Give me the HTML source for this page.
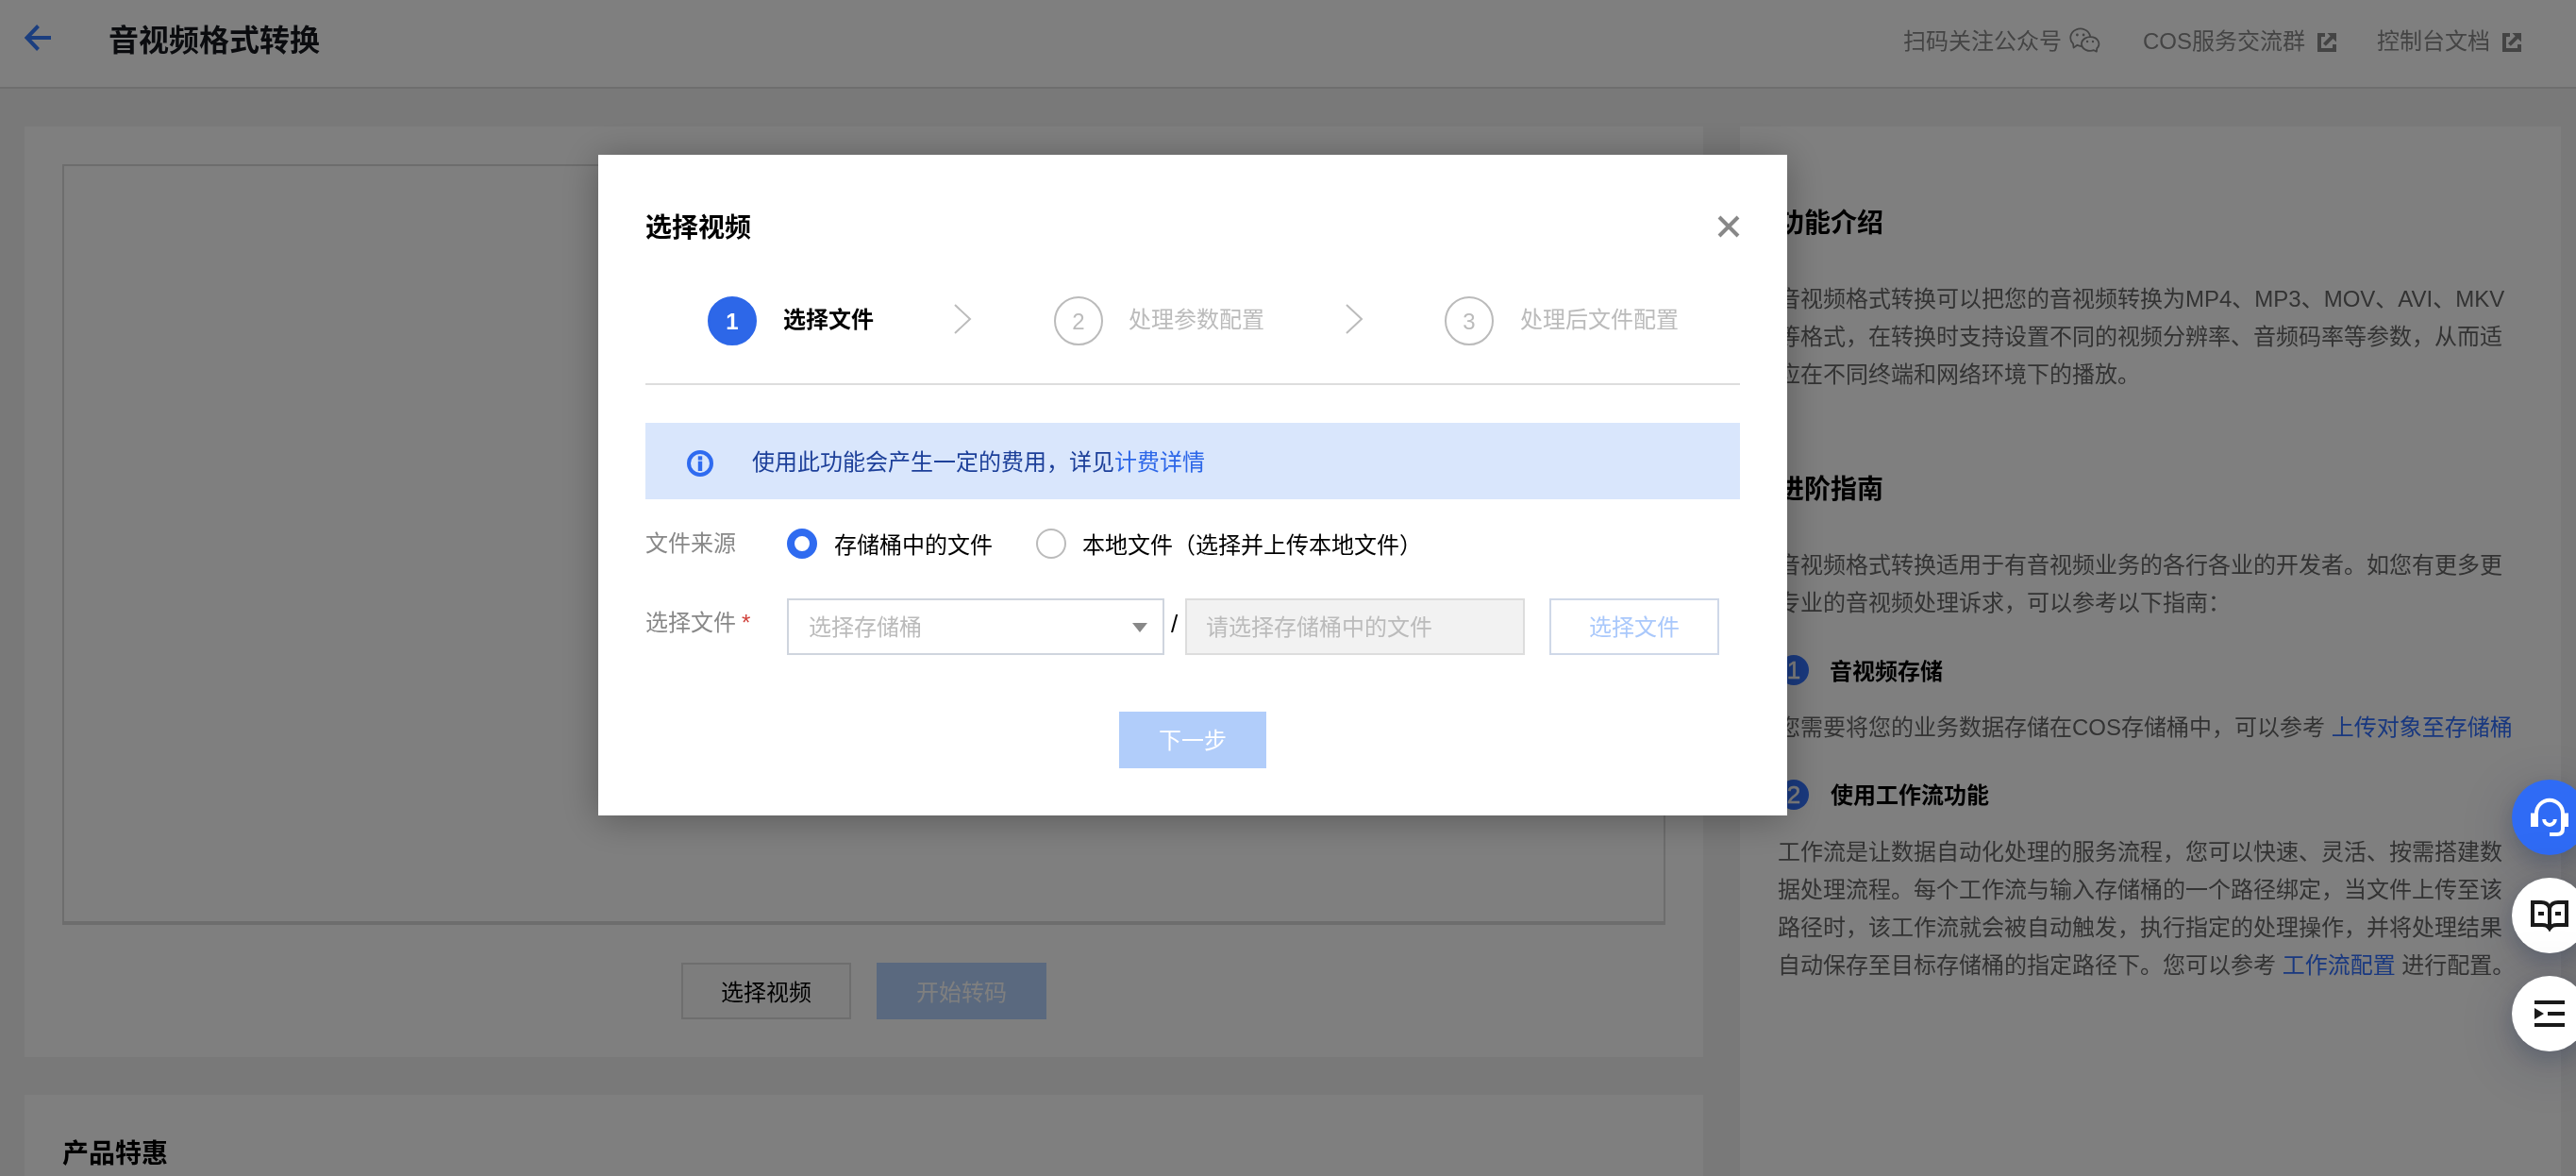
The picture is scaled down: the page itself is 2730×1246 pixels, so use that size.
<!DOCTYPE html>
<html lang="zh-CN">
<head>
<meta charset="utf-8">
<title>音视频格式转换</title>
<style>
*{box-sizing:border-box;margin:0;padding:0}
html,body{width:2730px;height:1246px;overflow:hidden;background:#f2f2f2}
body{position:relative;font-family:"Liberation Sans","Noto Sans CJK SC",sans-serif;font-size:24px;color:#000}
#root{position:absolute;left:0;top:0;width:2730px;height:1246px;overflow:hidden;will-change:transform}
.abs{position:absolute;white-space:nowrap}
.t{position:absolute;white-space:nowrap;line-height:40px;height:40px}
.b{font-weight:700}
a{color:#3270ff;text-decoration:none}
/* page */
#hdr{position:absolute;left:0;top:0;width:2730px;height:94px;background:#fff;border-bottom:2px solid #ddd}
.card{position:absolute;background:#fff}
.gray{color:#888}
.para{color:#666}
/* overlay */
#mask{position:absolute;left:0;top:0;width:2730px;height:1246px;background:rgba(0,0,0,.5)}
/* modal */
#modal{position:absolute;left:634px;top:164px;width:1260px;height:700px;background:#fff;box-shadow:0 4px 38px rgba(0,0,0,.3)}
#modal .t,#modal .abs,#modal div{position:absolute}
.circ{width:52px;height:52px;border-radius:50%;border:2px solid #bbb;color:#bbb;text-align:center;line-height:50px;font-size:24px}
.circ.on{background:#2d67e8;border-color:#2d67e8;color:#fff;font-weight:700}
.ph{color:#bbb}
.fab{position:absolute;left:2662px;width:80px;height:80px;border-radius:50%;background:#fff;box-shadow:0 8px 22px rgba(10,30,70,.2),0 14px 70px rgba(10,30,70,.22)}
.fab svg{position:absolute}
</style>
</head>
<body>
<div id="root">
<!-- ===== underlying page ===== -->
<div id="hdr"></div>
<svg class="abs" style="left:24px;top:24px" width="32" height="32" viewBox="0 0 32 32"><path d="M30 16H6M16.5 3.5L4.5 16l12 12.5" fill="none" stroke="#367cff" stroke-width="4"/></svg>
<div class="t b" style="left:115px;top:23px;font-size:32px;color:#16191f">音视频格式转换</div>
<div class="t gray" style="left:2017px;top:24px">扫码关注公众号</div>
<div class="t gray" style="left:2271px;top:24px">COS服务交流群</div>
<div class="t gray" style="left:2519px;top:24px">控制台文档</div>

<svg class="abs" style="left:2193px;top:29px" width="34" height="28" viewBox="0 0 34 28" fill="none" stroke="#888" stroke-width="1.8" stroke-linejoin="round" stroke-linecap="round"><path d="M22.1 9.23A10.5 9.5 0 1 0 4.05 17.4L4.6 21.6L8.45 18.75A10.5 9.5 0 0 0 12.98 19.98"/><path d="M29.25 22.26L28.9 25.7L26.09 24.21A9.2 7.4 0 1 1 29.25 22.26z"/><g fill="#888" stroke="none"><circle cx="8.4" cy="8" r="1.4"/><circle cx="15.1" cy="8" r="1.4"/><circle cx="19.1" cy="15" r="1.2"/><circle cx="25" cy="15" r="1.2"/></g></svg>
<svg class="abs" style="left:2456px;top:35px" width="20" height="20" viewBox="0 0 20 20" fill="#888"><path d="M0 0h8v4H4v12h12v-4h4v8H0z"/><path d="M10.4 0H20v9.6z"/><path d="M6 11l2.8 2.8L18 4.6L15.2 1.8z"/></svg>
<svg class="abs" style="left:2652px;top:35px" width="20" height="20" viewBox="0 0 20 20" fill="#888"><path d="M0 0h8v4H4v12h12v-4h4v8H0z"/><path d="M10.4 0H20v9.6z"/><path d="M6 11l2.8 2.8L18 4.6L15.2 1.8z"/></svg>

<!-- left card -->
<div class="card" style="left:26px;top:134px;width:1779px;height:986px"></div>
<div class="abs" style="left:66px;top:174px;width:1699px;height:806px;border:2px solid #dbdbdb;border-bottom-width:4px"></div>
<div class="abs" style="left:722px;top:1020px;width:180px;height:60px;border:2px solid #ddd;background:#fbfbfb"></div>
<div class="t" style="left:722px;top:1032px;width:180px;text-align:center">选择视频</div>
<div class="abs" style="left:929px;top:1020px;width:180px;height:60px;background:#b4d2ff"></div>
<div class="t" style="left:929px;top:1032px;width:180px;text-align:center;color:#fff">开始转码</div>
<!-- second card -->
<div class="card" style="left:26px;top:1160px;width:1779px;height:200px"></div>
<div class="t b" style="left:66px;top:1203px;font-size:28px">产品特惠</div>

<!-- right card -->
<div class="card" style="left:1844px;top:134px;width:870px;height:1200px"></div>
<div class="t b" style="left:1884px;top:217px;font-size:28px">功能介绍</div>
<div class="t para" style="left:1884px;top:297px">音视频格式转换可以把您的音视频转换为MP4、MP3、MOV、AVI、MKV</div>
<div class="t para" style="left:1884px;top:337px">等格式，在转换时支持设置不同的视频分辨率、音频码率等参数，从而适</div>
<div class="t para" style="left:1884px;top:377px">应在不同终端和网络环境下的播放。</div>
<div class="t b" style="left:1884px;top:499px;font-size:28px">进阶指南</div>
<div class="t para" style="left:1884px;top:579px">音视频格式转换适用于有音视频业务的各行各业的开发者。如您有更多更</div>
<div class="t para" style="left:1884px;top:619px">专业的音视频处理诉求，可以参考以下指南：</div>
<div class="abs" style="left:1885px;top:694px;width:32px;height:32px;border-radius:50%;background:#3474ff;color:#fff;text-align:center;line-height:32px;font-size:26px;-webkit-text-stroke:.5px #fff">1</div>
<div class="t b" style="left:1939px;top:692px">音视频存储</div>
<div class="t para" style="left:1884px;top:751px">您需要将您的业务数据存储在COS存储桶中，可以参考 <a>上传对象至存储桶</a></div>
<div class="abs" style="left:1885px;top:826px;width:32px;height:32px;border-radius:50%;background:#3474ff;color:#fff;text-align:center;line-height:32px;font-size:26px;-webkit-text-stroke:.5px #fff">2</div>
<div class="t b" style="left:1940px;top:823px">使用工作流功能</div>
<div class="t para" style="left:1884px;top:883px">工作流是让数据自动化处理的服务流程，您可以快速、灵活、按需搭建数</div>
<div class="t para" style="left:1884px;top:923px">据处理流程。每个工作流与输入存储桶的一个路径绑定，当文件上传至该</div>
<div class="t para" style="left:1884px;top:963px">路径时，该工作流就会被自动触发，执行指定的处理操作，并将处理结果</div>
<div class="t para" style="left:1884px;top:1003px">自动保存至目标存储桶的指定路径下。您可以参考 <a>工作流配置</a> 进行配置。</div>

<!-- ===== overlay ===== -->
<div id="mask"></div>

<!-- ===== modal ===== -->
<div id="modal">
  <div class="t b" style="left:50px;top:58px;font-size:28px">选择视频</div>
  <svg class="abs" style="left:1186px;top:64px" width="24" height="24" viewBox="0 0 24 24"><path d="M2 2l20 20M22 2L2 22" fill="none" stroke="#888" stroke-width="4"/></svg>
  <!-- steps -->
  <div class="circ on" style="left:116px;top:150px">1</div>
  <div class="t b" style="left:196px;top:155px">选择文件</div>
  <svg class="abs" style="left:376px;top:157px" width="20" height="34" viewBox="0 0 20 34"><path d="M2 2l16 15L2 32" fill="none" stroke="#bbb" stroke-width="2"/></svg>
  <div class="circ" style="left:483px;top:150px">2</div>
  <div class="t ph" style="left:562px;top:155px">处理参数配置</div>
  <svg class="abs" style="left:791px;top:157px" width="20" height="34" viewBox="0 0 20 34"><path d="M2 2l16 15L2 32" fill="none" stroke="#bbb" stroke-width="2"/></svg>
  <div class="circ" style="left:897px;top:150px">3</div>
  <div class="t ph" style="left:977px;top:155px">处理后文件配置</div>
  <div style="left:50px;top:242px;width:1160px;height:2px;background:#ddd"></div>
  <!-- alert -->
  <div style="left:50px;top:284px;width:1160px;height:81px;background:#d9e6fc"></div>
  <svg class="abs" style="left:94px;top:313px" width="28" height="28" viewBox="0 0 28 28"><circle cx="14" cy="14" r="12" fill="none" stroke="#2f6bf0" stroke-width="4"/><rect x="11.8" y="11.7" width="4.4" height="10.3" fill="#2f6bf0"/><rect x="11.8" y="6.3" width="4.4" height="4.2" fill="#2f6bf0"/></svg>
  <div class="t" style="left:163px;top:306px;color:#1c3f99">使用此功能会产生一定的费用，详见<a style="color:#2d67e8">计费详情</a></div>
  <!-- row 1 -->
  <div class="t gray" style="left:50px;top:392px">文件来源</div>
  <div style="left:200px;top:396px;width:32px;height:32px;border-radius:50%;border:8px solid #2f6bf0;background:#fff"></div>
  <div class="t" style="left:250px;top:394px">存储桶中的文件</div>
  <div style="left:464px;top:396px;width:32px;height:32px;border-radius:50%;border:2px solid #bbb;background:#fff"></div>
  <div class="t" style="left:513px;top:394px">本地文件（选择并上传本地文件）</div>
  <!-- row 2 -->
  <div class="t gray" style="left:50px;top:476px">选择文件</div>
  <div class="t" style="left:152px;top:476px;color:#d0413a">*</div>
  <div style="left:200px;top:470px;width:400px;height:60px;border:2px solid #cfd5de;background:#fff"></div>
  <div class="t ph" style="left:223px;top:481px">选择存储桶</div>
  <svg class="abs" style="left:566px;top:496px" width="16" height="10" viewBox="0 0 16 10"><path d="M0 0h16L8 10z" fill="#888"/></svg>
  <div class="t" style="left:607px;top:477px;font-size:26px">/</div>
  <div style="left:622px;top:470px;width:360px;height:60px;border:2px solid #ddd;background:#f2f2f2"></div>
  <div class="t ph" style="left:644px;top:481px">请选择存储桶中的文件</div>
  <div style="left:1008px;top:470px;width:180px;height:60px;border:2px solid #cfd8e8;background:#fff"></div>
  <div class="t" style="left:1008px;top:481px;width:180px;text-align:center;color:#a9c8fb">选择文件</div>
  <div style="left:552px;top:590px;width:156px;height:60px;background:#b1cdfa"></div>
  <div class="t" style="left:552px;top:601px;width:156px;text-align:center;color:#fff">下一步</div>
</div>

<!-- ===== floating buttons ===== -->
<div class="fab" style="top:826px;background:#2f6bf5"><svg width="80" height="80" viewBox="0 0 80 80" fill="none" stroke="#fff" stroke-width="4"><path d="M26 36V35.85A14 14 0 0 1 54 35.85V52Q54 58 48 58H40"/><path d="M34.2 42.1A5.8 5.8 0 0 0 45.8 42.1"/><path d="M20 35.6h8V50h-8zM52 35.6h8V50h-8z" fill="#fff" stroke="none"/></svg></div>
<div class="fab" style="top:930px"><svg width="80" height="80" viewBox="0 0 80 80" fill="none" stroke="#1a1a1a" stroke-width="4"><path d="M22 26h9q7 0 9 6q2-6 9-6h9v24h-10q-6 0-8 3.5q-2-3.5-8-3.5h-10z"/><path d="M40 31v22"/><path d="M35.5 52h9L40 56.5z" fill="#1a1a1a" stroke="none"/><path d="M28 36h6v4h-6zM46 36h6v4h-6z" fill="#1a1a1a" stroke="none"/></svg></div>
<div class="fab" style="top:1034px"><svg width="80" height="80" viewBox="0 0 80 80" fill="#1a1a1a"><path d="M24 26h32v4H24zM38 38h18v4H38zM24 50h32v4H24zM24 34L34 40L24 46z"/></svg></div>
</div>
</body>
</html>
